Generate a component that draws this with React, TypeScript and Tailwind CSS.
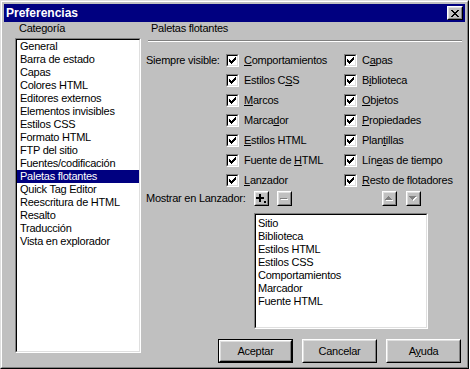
import React from 'react';

const Raised: React.FC<{ className?: string; children?: React.ReactNode }> = ({ className = '', children }) => (
    <div className={`border border-t-white border-l-white border-r-black border-b-black ${className}`}>
        <div className="w-full h-full border border-t-[#dfdfdf] border-l-[#dfdfdf] border-r-[#808080] border-b-[#808080] bg-[#c0c0c0] flex items-center justify-center">
            {children}
        </div>
    </div>
);

const Sunken: React.FC<{ className?: string; children?: React.ReactNode }> = ({ className = '', children }) => (
    <div className={`border border-t-[#808080] border-l-[#808080] border-r-white border-b-white ${className}`}>
        <div className="w-full h-full border border-t-black border-l-black border-r-[#dfdfdf] border-b-[#dfdfdf] bg-white overflow-hidden">
            {children}
        </div>
    </div>
);

const CheckBox: React.FC = () => (
    <Sunken className="w-[13px] h-[13px] shrink-0">
        <svg width="9" height="9" viewBox="0 0 9 9" shapeRendering="crispEdges" className="block">
            <path d="M1 3h1v3H1z M2 4h1v3H2z M3 5h1v3H3z M4 4h1v3H4z M5 3h1v3H5z M6 2h1v3H6z M7 1h1v3H7z" fill="black" />
        </svg>
    </Sunken>
);

const CheckItem: React.FC<{ label: React.ReactNode }> = ({ label }) => (
    <div className="flex items-center gap-[5px]">
        <CheckBox />
        <span className="whitespace-nowrap">{label}</span>
    </div>
);

const categories = [
    'General', 'Barra de estado', 'Capas', 'Colores HTML', 'Editores externos', 'Elementos invisibles',
    'Estilos CSS', 'Formato HTML', 'FTP del sitio', 'Fuentes/codificación', 'Paletas flotantes',
    'Quick Tag Editor', 'Reescritura de HTML', 'Resalto', 'Traducción', 'Vista en explorador',
];

const launcher = ['Sitio', 'Biblioteca', 'Estilos HTML', 'Estilos CSS', 'Comportamientos', 'Marcador', 'Fuente HTML'];

const leftChecks: React.ReactNode[] = [
    <><u>C</u>omportamientos</>,
    <>Estilos C<u>S</u>S</>,
    <><u>M</u>arcos</>,
    <>Marca<u>d</u>or</>,
    <><u>E</u>stilos HTML</>,
    <>Fuente de <u>H</u>TML</>,
    <><u>L</u>anzador</>,
];

const rightChecks: React.ReactNode[] = [
    <>C<u>a</u>pas</>,
    <>B<u>i</u>blioteca</>,
    <><u>O</u>bjetos</>,
    <><u>P</u>ropiedades</>,
    <>Plan<u>t</u>illas</>,
    <>Lín<u>e</u>as de tiempo</>,
    <><u>R</u>esto de flotadores</>,
];

const App: React.FC = () => {
    return (
        <div className="w-[469px] h-[369px] border border-t-[#dfdfdf] border-l-[#dfdfdf] border-r-black border-b-black font-['Liberation_Sans',Arial,sans-serif] text-[11px] leading-[13px] tracking-[-0.25px] text-black select-none">
            <div className="w-full h-full border border-t-white border-l-white border-r-[#808080] border-b-[#808080] bg-[#c0c0c0] p-[2px] flex flex-col">
                {/* title bar */}
                <div className="h-[18px] bg-[#000080] flex items-center justify-between pl-[2px] pr-[2px] shrink-0">
                    <span className="text-white font-bold text-[12px] tracking-normal">Preferencias</span>
                    <Raised className="w-[16px] h-[14px]">
                        <svg width="8" height="7" viewBox="0 0 8 7" shapeRendering="crispEdges" className="block">
                            <path d="M0 0h2v1H0z M6 0h2v1H6z M1 1h2v1H1z M5 1h2v1H5z M2 2h4v1H2z M3 3h2v1H3z M2 4h4v1H2z M1 5h2v1H1z M5 5h2v1H5z M0 6h2v1H0z M6 6h2v1H6z" fill="black" />
                        </svg>
                    </Raised>
                </div>

                <div className="flex flex-1">
                    {/* categories */}
                    <div className="ml-[11px] w-[126px] flex flex-col">
                        <div className="pl-[4px]">Categoría</div>
                        <Sunken className="mt-[3px] h-[315px]">
                            {categories.map(c => (
                                <div
                                    key={c}
                                    className={`pl-[3px] h-[13px] whitespace-nowrap ${c === 'Paletas flotantes' ? 'bg-[#000080] text-white' : ''}`}
                                >
                                    {c}
                                </div>
                            ))}
                        </Sunken>
                    </div>

                    {/* panel */}
                    <div className="ml-[4px] w-[317px] flex flex-col">
                        <div className="pl-[6px]">Paletas flotantes</div>
                        <div className="mt-[5px] ml-[3px] border-t border-t-[#808080] border-b border-b-white" />

                        <div className="mt-[8px] grid grid-cols-[81px_118px_1fr] auto-rows-[20px]">
                            {leftChecks.map((l, i) => (
                                <React.Fragment key={i}>
                                    <div className="flex items-center pl-[1px] whitespace-nowrap">{i === 0 ? 'Siempre visible:' : ''}</div>
                                    <CheckItem label={l} />
                                    <CheckItem label={rightChecks[i]} />
                                </React.Fragment>
                            ))}
                        </div>

                        <div className="h-[17px] flex items-center">
                            <div className="w-[109px] pl-[1px] whitespace-nowrap">Mostrar en Lanzador:</div>
                            <Raised className="w-[15px] h-[15px]">
                                <svg width="11" height="11" viewBox="0 0 11 11" shapeRendering="crispEdges" className="block">
                                    <path d="M3 1h2v8H3z M0 4h8v2H0z M8 8h2v2H8z" fill="black" />
                                </svg>
                            </Raised>
                            <Raised className="ml-[8px] w-[15px] h-[15px]">
                                <svg width="11" height="11" viewBox="0 0 11 11" shapeRendering="crispEdges" className="block">
                                    <path d="M2 6h7v1H2z" fill="white" />
                                    <path d="M1 5h7v1H1z" fill="#808080" />
                                </svg>
                            </Raised>
                            <Raised className="ml-[90px] w-[15px] h-[15px]">
                                <svg width="11" height="11" viewBox="0 0 11 11" shapeRendering="crispEdges" className="block">
                                    <path d="M5 4h1v1H5z M4 5h3v1H4z M3 6h5v1H3z M2 7h7v1H2z" fill="white" />
                                    <path d="M4 3h1v1H4z M3 4h3v1H3z M2 5h5v1H2z M1 6h7v1H1z" fill="#808080" />
                                </svg>
                            </Raised>
                            <Raised className="ml-[9px] w-[15px] h-[15px]">
                                <svg width="11" height="11" viewBox="0 0 11 11" shapeRendering="crispEdges" className="block">
                                    <path d="M2 4h7v1H2z M3 5h5v1H3z M4 6h3v1H4z M5 7h1v1H5z" fill="white" />
                                    <path d="M1 3h7v1H1z M2 4h5v1H2z M3 5h3v1H3z M4 6h1v1H4z" fill="#808080" />
                                </svg>
                            </Raised>
                        </div>

                        <Sunken className="mt-[6px] ml-[109px] w-[174px] h-[116px]">
                            <div className="pt-[2px]">
                                {launcher.map(l => (
                                    <div key={l} className="pl-[2px] h-[13px] whitespace-nowrap">{l}</div>
                                ))}
                            </div>
                        </Sunken>

                        <div className="mt-[10px] flex justify-end gap-[9px] pr-[1px]">
                            <div className="w-[75px] h-[24px] border border-black">
                                <Raised className="w-full h-full">Aceptar</Raised>
                            </div>
                            <Raised className="w-[75px] h-[24px]">Cancelar</Raised>
                            <Raised className="w-[75px] h-[24px]">
                                <span>A<u>y</u>uda</span>
                            </Raised>
                        </div>
                    </div>
                </div>
            </div>
        </div>
    );
};

export default App;
